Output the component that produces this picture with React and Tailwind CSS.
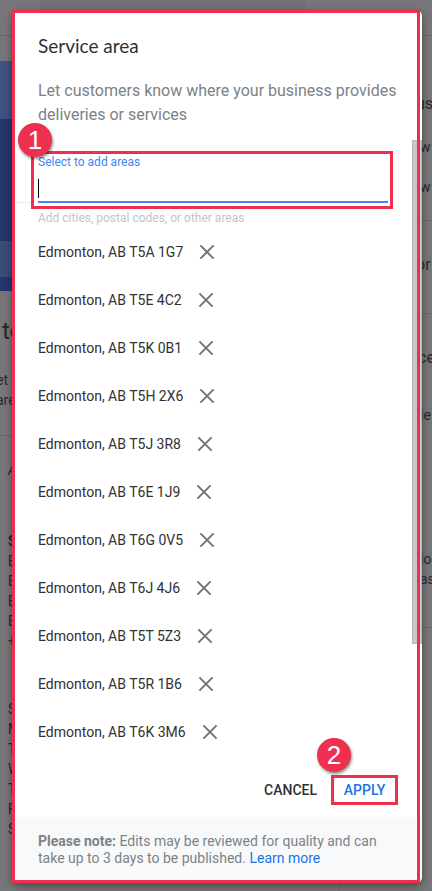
import { useState } from 'react';

const initialAreas = [
  'Edmonton, AB T5A 1G7',
  'Edmonton, AB T5E 4C2',
  'Edmonton, AB T5K 0B1',
  'Edmonton, AB T5H 2X6',
  'Edmonton, AB T5J 3R8',
  'Edmonton, AB T6E 1J9',
  'Edmonton, AB T6G 0V5',
  'Edmonton, AB T6J 4J6',
  'Edmonton, AB T5T 5Z3',
  'Edmonton, AB T5R 1B6',
  'Edmonton, AB T6K 3M6',
];

const hourLines = ['S', 'M', 'T', 'W', 'T', 'F', 'S'];

function CloseIcon() {
  return (
    <svg width="24" height="24" viewBox="0 0 24 24" fill="none" stroke="#757575" strokeWidth="2" aria-hidden="true">
      <path d="M5.4 5.4 18.6 18.6M18.6 5.4 5.4 18.6" />
    </svg>
  );
}

function StepBadge({ number, className }) {
  return (
    <span
      className={`absolute flex size-[34px] items-center justify-center rounded-full bg-[#ee2f50] font-['Liberation_Sans',sans-serif] text-[26px] leading-none text-white shadow-[1px_2px_3px_rgba(0,0,0,0.45)] ${className}`}
    >
      {number}
    </span>
  );
}

// The dimmed page behind the dialog
function Backdrop() {
  return (
    <div className="absolute inset-0 flex overflow-hidden text-sm leading-5 text-[#29292b]" aria-hidden="true">
      <div className="w-10">
        <div className="h-9 border-b border-[#68686b]" />
        <div className="h-[25px]" />
        <div className="h-[58px] bg-[#405280]" />
        <div className="h-[122px] bg-[#25366b]" />
        <div className="h-9 bg-[#3a4d78]" />
        <div className="h-[14px] bg-[#24366f]" />
        <div className="h-[79px] pt-7 pl-0.5 text-2xl leading-6">to</div>
        <div className="-ml-1 h-[66px] border-b border-[#68686b]">et n<br />are</div>
        <div className="h-[95px] pt-6 pl-2 italic">A</div>
        <div className="pl-2 leading-5">
          <b className="block">S</b>
          <p>E</p>
          <p>E</p>
          <p>E</p>
          <p>E</p>
          <p>+</p>
        </div>
        <div className="pt-12 pl-2 leading-5">
          {hourLines.map((line, i) => (
            <p key={i}>{line}</p>
          ))}
        </div>
      </div>
      <div className="flex flex-1 flex-col">
        <div className="mr-[108px] h-9 border-r border-[#7c7c7e] bg-[#727274]" />
        <div className="mr-[76px] flex-1 border-r border-[#6b6b6e]" />
      </div>
      <div className="w-4 whitespace-nowrap">
        <div className="h-9 border-b border-[#68686b]" />
        <div className="h-[91px] pt-14 text-base">us</div>
        <div className="h-[94px] border-b border-[#68686b] pl-1 leading-10">w<br />w</div>
        <div className="h-[93px] border-b border-[#68686b] pt-8 text-base">or</div>
        <div className="h-[87px] pt-8 pl-0.5 text-base">ce</div>
        <div className="h-[136px] pt-1 pl-1">le</div>
        <div className="h-[91px] border-b border-[#68686b] pt-3 pl-1">lo<br />as</div>
      </div>
    </div>
  );
}

export default function App() {
  const [areas, setAreas] = useState(initialAreas);
  const [query, setQuery] = useState('');

  const removeArea = (area) => setAreas(areas.filter((item) => item !== area));

  return (
    <div className="relative min-h-screen overflow-hidden bg-[#777779] pt-2.5 pr-2.5 pb-2 pl-3 font-[Roboto,sans-serif]">
      <Backdrop />

      <section
        role="dialog"
        aria-labelledby="dialog-title"
        className="relative rounded-md bg-white shadow-[0_3px_8px_rgba(0,0,0,0.4)]"
      >
        <header className="pt-6 pr-5 pb-[13px] pl-[26px]">
          <h1 id="dialog-title" className="font-[Lato,sans-serif] text-[19px] leading-6 text-[#303134]">
            Service area
          </h1>
          <p className="mt-[21px] text-base leading-6 text-[#7c8287]">
            Let customers know where your business provides deliveries or services
          </p>
        </header>

        <div className="flex">
          <div className="min-w-0 flex-1">
            <div className="relative pt-3 pr-6 pl-[26px]">
              <label htmlFor="areas" className="block pt-0.5 text-xs leading-4 text-[#4285f4]">
                Select to add areas
              </label>
              <input
                id="areas"
                type="text"
                value={query}
                onChange={(e) => setQuery(e.target.value)}
                className="block h-[33px] w-full border-b-2 border-[#4285f4] bg-transparent pt-1 text-base caret-transparent outline-none"
              />
              <span className="absolute top-[39px] left-[26px] h-[19px] w-px bg-black" />
              <span className="absolute bottom-0 left-0 h-px w-5 bg-[#ececec]" />
            </div>
            <p className="px-[26px] pt-[7px] text-xs leading-4 text-[#c4c4c4]">
              Add cities, postal codes, or other areas
            </p>
            <ul className="mt-0.5 pl-[26px]">
              {areas.map((area) => (
                <li key={area} className="flex h-12 items-center gap-3 text-sm text-[#303134]">
                  {area}
                  <button type="button" aria-label={`Remove ${area}`} onClick={() => removeArea(area)}>
                    <CloseIcon />
                  </button>
                </li>
              ))}
            </ul>
          </div>
          <div className="h-[504px] w-2.5 border border-[#b5b5b5] bg-[#c9c9c9]" />
        </div>

        <div className="flex items-center justify-end gap-2.5 pt-[19px] pr-6 pb-3 text-sm font-medium">
          <button type="button" className="px-1 text-[#303134]">CANCEL</button>
          <div className="relative">
            <button type="button" className="block h-[30px] w-[67px] border-3 border-[#ee2f50] text-[#1a73e8]">
              APPLY
            </button>
            <StepBadge number={2} className="-top-[37px] -left-[14px]" />
          </div>
        </div>

        <footer className="rounded-b-md bg-[#f8f9fb] py-4 pr-5 pl-[26px] text-sm leading-[17px] text-[#7c8287]">
          <b>Please note:</b> Edits may be reviewed for quality and can take up to 3 days to be published.{' '}
          <a href="#learn" className="text-[#1a73e8]">Learn more</a>
        </footer>

        {/* callouts */}
        <div className="pointer-events-none absolute inset-y-0 right-0.5 left-0 border-3 border-[#ee2f50]" />
        <div className="pointer-events-none absolute top-[141px] right-[29px] left-[19px] h-[58px] border-3 border-[#ee2f50]" />
        <StepBadge number={1} className="top-[113px] left-[6px]" />
      </section>
    </div>
  );
}
